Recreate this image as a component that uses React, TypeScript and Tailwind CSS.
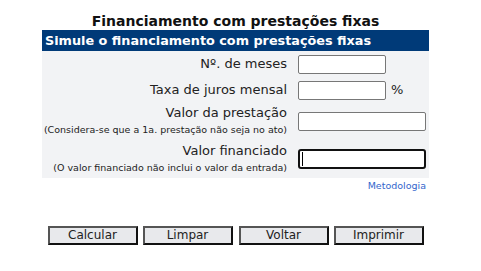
export default function App() {
  const font = { fontFamily: '"DejaVu Sans", Verdana, sans-serif' };
  return (
    <div className="w-[481px] h-[271px] bg-white text-black" style={font}>
      <div className="w-[471px] pt-[12px] flex flex-col items-center">
        <div className="text-[14px] leading-[18px] font-bold text-[#111]">Financiamento com prestações fixas</div>
        <div className="w-[387px]">
          <div className="h-[21px] bg-[#003a78] text-white text-[12.8px] font-bold leading-[21px] pl-[3px]">
            Simule o financiamento com prestações fixas
          </div>
          <div className="bg-[#f2f3f5] pb-[2px] pt-[3px]">
            <div className="flex items-center h-[20px]">
              <div className="w-[245px] text-right text-[13px] text-[#222]">Nº. de meses</div>
              <input className="ml-[11px] w-[88px] h-[19px] bg-white border border-[#777] rounded-[2px]" />
            </div>
            <div className="flex items-center h-[20px] mt-[6px]">
              <div className="w-[245px] text-right text-[13px] text-[#222]">Taxa de juros mensal</div>
              <input className="ml-[11px] w-[88px] h-[19px] bg-white border border-[#777] rounded-[2px]" />
              <span className="ml-[5px] text-[13px] text-[#222]">%</span>
            </div>
            <div className="flex items-center mt-[4px]">
              <div className="w-[245px] text-right text-[#222]">
                <div className="text-[13px] leading-[18px]">Valor da prestação</div>
                <div className="text-[9.5px] leading-[16px]">(Considera-se que a 1a. prestação não seja no ato)</div>
              </div>
              <input className="ml-[11px] w-[128px] h-[19px] bg-white border border-[#777] rounded-[2px]" />
            </div>
            <div className="flex items-center mt-[4px]">
              <div className="w-[245px] text-right text-[#222]">
                <div className="text-[13px] leading-[18px]">Valor financiado</div>
                <div className="text-[9.5px] leading-[16px]">(O valor financiado não inclui o valor da entrada)</div>
              </div>
              <div className="ml-[11px] w-[128px] h-[20px] bg-white border-2 border-[#111] rounded-[3px] flex items-center pl-[2px]">
                <div className="w-px h-[14px] bg-black" />
              </div>
            </div>
          </div>
          <div className="text-right text-[9.5px] leading-[12px] text-[#3366cc] pr-[3px] mt-[2px]">Metodologia</div>
        </div>
        <div className="flex gap-[5px] mt-[34px]">
          {['Calcular', 'Limpar', 'Voltar', 'Imprimir'].map((t, i) => (
            <button
              key={t}
              className={`${i === 2 ? 'w-[90px] ml-[1px]' : 'w-[90px]'} h-[19px] bg-[#e8e9ec] border-2 border-t-[#555] border-l-[#555] border-r-[#111] border-b-[#111] text-[12px] leading-[15px] text-[#222]`}
            >
              {t}
            </button>
          ))}
        </div>
      </div>
    </div>
  );
}
